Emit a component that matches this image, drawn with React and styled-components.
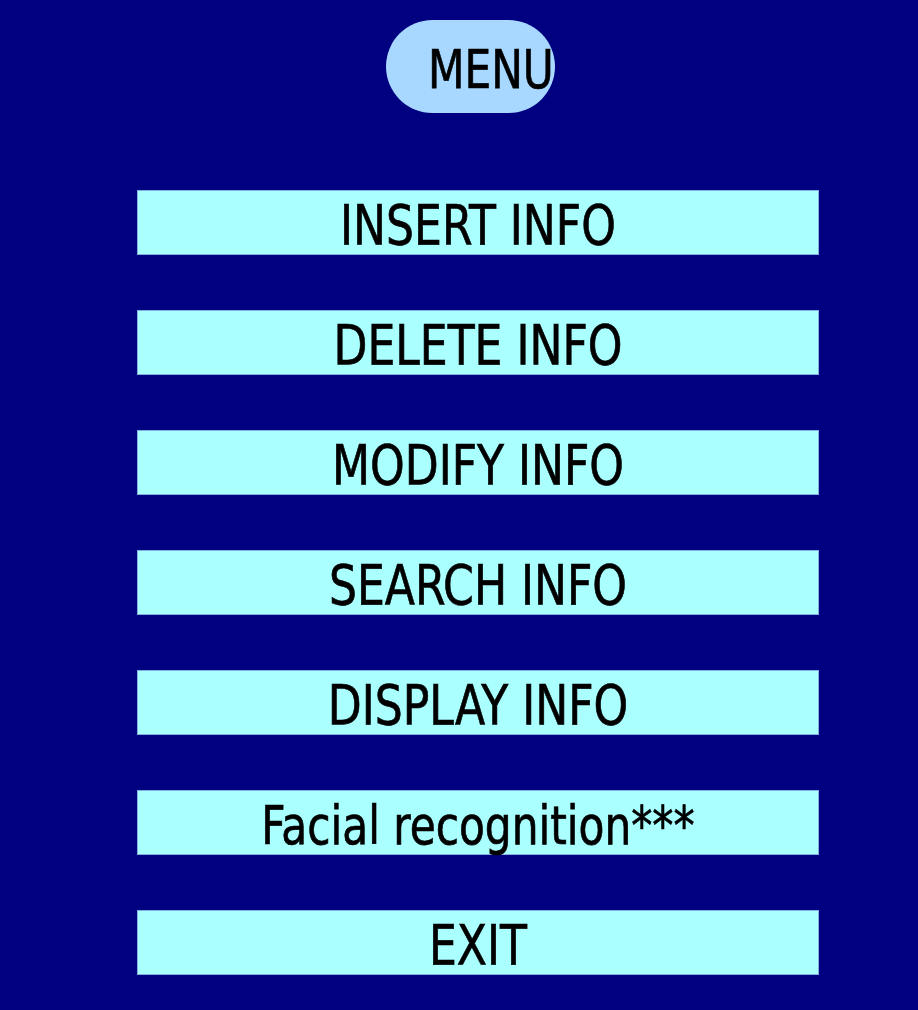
import React from "react";
import styled, { createGlobalStyle } from "styled-components";

const GlobalStyle = createGlobalStyle`
  html, body {
    margin: 0;
    padding: 0;
    background: #000080;
  }
  body {
    font-family: "DejaVu Sans Condensed", "DejaVu Sans", sans-serif;
  }
`;

const items = [
  "INSERT INFO",
  "DELETE INFO",
  "MODIFY INFO",
  "SEARCH INFO",
  "DISPLAY INFO",
  "Facial recognition***",
  "EXIT",
];

const Page = styled.div`
  width: 918px;
  height: 1010px;
  background: #000080;
  box-sizing: border-box;
  padding: 20px 0 0 137px;
  overflow: hidden;
`;

const Column = styled.div`
  width: 682px;
  display: flex;
  flex-direction: column;
`;

const MenuPill = styled.div`
  margin-left: 249px;
  width: 169px;
  height: 93px;
  box-sizing: border-box;
  padding-left: 42px;
  border-radius: 47px;
  background: #a8d8ff;
  display: flex;
  align-items: center;
  white-space: nowrap;
`;

const List = styled.div`
  margin-top: 77px;
  display: flex;
  flex-direction: column;
  gap: 55px;
`;

const MenuButton = styled.div`
  height: 65px;
  box-sizing: border-box;
  background: #aaffff;
  border: 1px solid #7fb0e0;
  display: flex;
  align-items: center;
  justify-content: center;
`;

const Label = styled.span`
  display: inline-block;
  font-size: ${(p) => (p.$small ? 47 : 49)}px;
  line-height: 1;
  color: #000;
  -webkit-text-stroke: 0.6px #000;
  transform: translateY(3px) scaleY(1.13);
  white-space: nowrap;
`;

const App = () => {
  return (
    <>
      <GlobalStyle />
      <Page>
        <Column>
          <MenuPill>
            <Label $small>MENU</Label>
          </MenuPill>
          <List>
            {items.map((item) => (
              <MenuButton key={item}>
                <Label $small={item.startsWith("Facial")}>{item}</Label>
              </MenuButton>
            ))}
          </List>
        </Column>
      </Page>
    </>
  );
};

export default App;
